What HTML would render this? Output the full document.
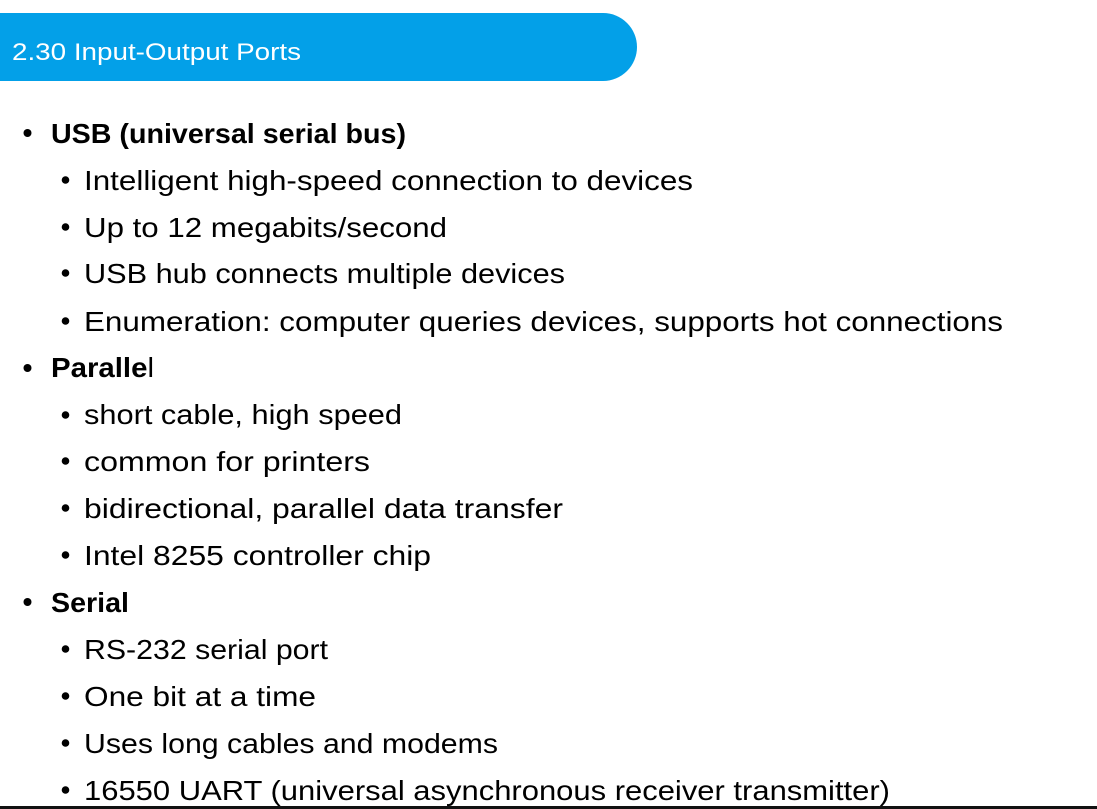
<!DOCTYPE html>
<html><head><meta charset="utf-8"><style>
html,body{margin:0;padding:0;background:#fff;overflow:hidden}
svg{display:block}
text{font-family:"Liberation Sans",sans-serif;fill:#000}
</style></head><body>
<svg width="1097" height="809" viewBox="0 0 1097 809" xmlns="http://www.w3.org/2000/svg">
<rect width="1097" height="809" fill="#fff"/>
<path d="M0 13 H603 A34 34 0 0 1 603 81 H0 Z" fill="#03a0e8"/>
<text x="12" y="60" font-size="24" style="fill:#fff" textLength="289" lengthAdjust="spacingAndGlyphs">2.30 Input-Output Ports</text>
<g font-size="28">
<circle cx="27.5" cy="133" r="4"/>
<text x="51" y="143" font-weight="bold" textLength="355" lengthAdjust="spacingAndGlyphs">USB (universal serial bus)</text>
<circle cx="65.5" cy="180" r="3.8"/>
<text x="84" y="190" textLength="609" lengthAdjust="spacingAndGlyphs">Intelligent high-speed connection to devices</text>
<circle cx="65.5" cy="227" r="3.8"/>
<text x="84" y="237" textLength="363" lengthAdjust="spacingAndGlyphs">Up to 12 megabits/second</text>
<circle cx="65.5" cy="273" r="3.8"/>
<text x="84" y="283" textLength="481" lengthAdjust="spacingAndGlyphs">USB hub connects multiple devices</text>
<circle cx="65.5" cy="321" r="3.8"/>
<text x="84" y="331" textLength="919" lengthAdjust="spacingAndGlyphs">Enumeration: computer queries devices, supports hot connections</text>
<circle cx="27.5" cy="368" r="4"/>
<text x="51" y="377" textLength="103" lengthAdjust="spacingAndGlyphs"><tspan font-weight="bold">Paralle</tspan>l</text>
<circle cx="65.5" cy="415" r="3.8"/>
<text x="84" y="424" textLength="318" lengthAdjust="spacingAndGlyphs">short cable, high speed</text>
<circle cx="65.5" cy="461" r="3.8"/>
<text x="84" y="471" textLength="286" lengthAdjust="spacingAndGlyphs">common for printers</text>
<circle cx="65.5" cy="508" r="3.8"/>
<text x="84" y="518" textLength="479" lengthAdjust="spacingAndGlyphs">bidirectional, parallel data transfer</text>
<circle cx="65.5" cy="555" r="3.8"/>
<text x="84" y="565" textLength="347" lengthAdjust="spacingAndGlyphs">Intel 8255 controller chip</text>
<circle cx="27.5" cy="602" r="4"/>
<text x="51" y="612" font-weight="bold" textLength="78" lengthAdjust="spacingAndGlyphs">Serial</text>
<circle cx="65.5" cy="649" r="3.8"/>
<text x="84" y="659" textLength="244" lengthAdjust="spacingAndGlyphs">RS-232 serial port</text>
<circle cx="65.5" cy="696" r="3.8"/>
<text x="84" y="706" textLength="232" lengthAdjust="spacingAndGlyphs">One bit at a time</text>
<circle cx="65.5" cy="743" r="3.8"/>
<text x="84" y="753" textLength="414" lengthAdjust="spacingAndGlyphs">Uses long cables and modems</text>
<circle cx="65.5" cy="790" r="3.8"/>
<text x="84" y="800" textLength="806" lengthAdjust="spacingAndGlyphs">16550 UART (universal asynchronous receiver transmitter)</text>
</g>
<rect x="0" y="806" width="1097" height="3" fill="#111"/>
</svg>
</body></html>
